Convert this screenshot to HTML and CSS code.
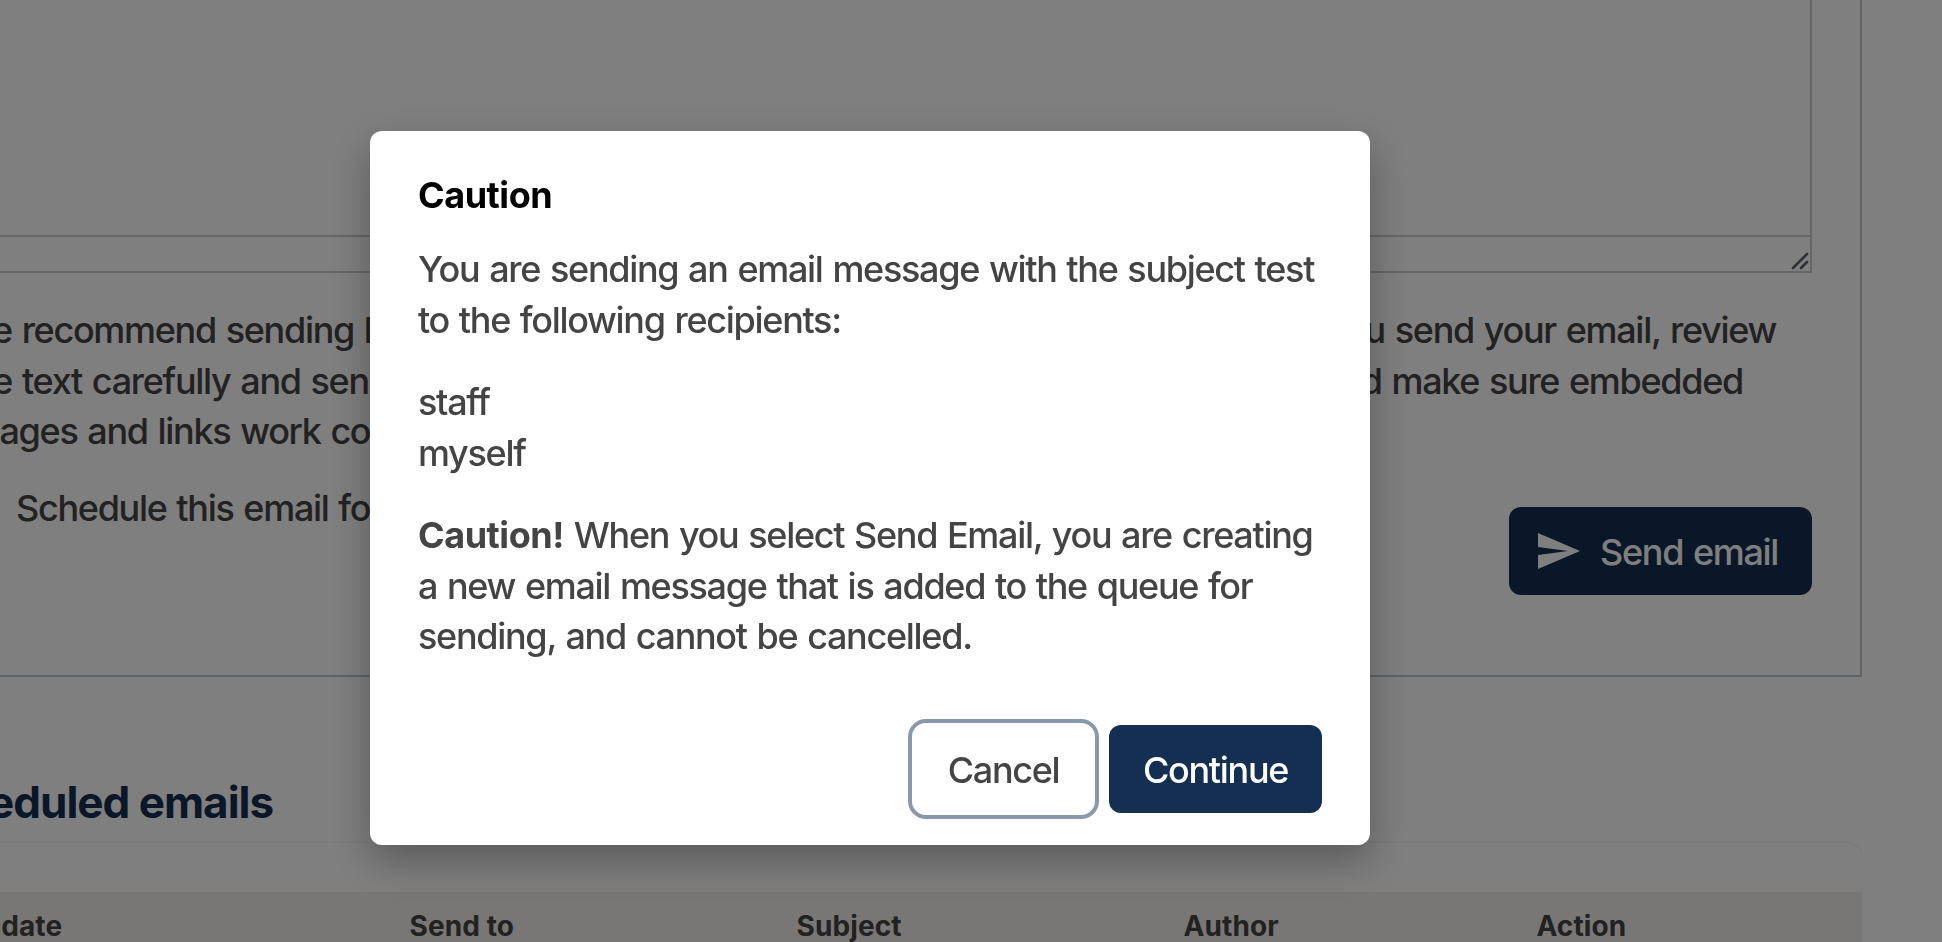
FILE: index.html
```html
<!DOCTYPE html>
<html lang="en">
<head>
<meta charset="utf-8">
<title>Send email</title>
<link rel="stylesheet" href="styles.css">
</head>
<body>
<main class="page">
  <section class="panel">
    <div class="editor">
      <div class="editor-area"></div>
      <div class="editor-status">
        <svg class="grip" width="18" height="18" viewBox="0 0 18 18"><path d="M2 16 16 2M10 16l6-6"/></svg>
      </div>
    </div>
    <div class="advice">
      <div class="advice-line"><span>We recommend sending large</span><span>you send your email, review</span></div>
      <div class="advice-line second"><span>the text carefully and send</span><span>and make sure embedded</span></div>
      <div class="advice-line third"><span>images and links work correctly.</span></div>
    </div>
    <div class="actions">
      <label class="schedule">Schedule this email for later</label>
      <button class="btn btn-primary btn-send">
        <svg width="48" height="48" viewBox="0 0 24 24"><path fill="currentColor" d="M2.01 21 23 12 2.01 3 2 10l15 2-15 2z"/></svg>
        <span>Send email</span>
      </button>
    </div>
  </section>
  <h2 class="heading">Scheduled emails</h2>
  <section class="card">
    <div class="thead">
      <span class="th-date">Send date</span><span>Send to</span><span>Subject</span><span>Author</span><span>Action</span>
    </div>
  </section>
</main>
<div class="overlay">
  <div class="dialog" role="dialog">
    <h3 class="title">Caution</h3>
    <div class="copy">
      <p>You are sending an email message with the subject test<br>to the following recipients:</p>
      <p>staff<br>myself</p>
      <p><strong>Caution!</strong> When you select Send Email, you are creating<br>a new email message that is added to the queue for<br>sending, and cannot be cancelled.</p>
    </div>
    <div class="buttons">
      <button class="btn btn-cancel"><span>Cancel</span></button>
      <button class="btn btn-primary btn-continue"><span>Continue</span></button>
    </div>
  </div>
</div>
</body>
</html>
```
FILE: styles.css
```css
* { box-sizing: border-box; }
html, body { margin: 0; height: 942px; overflow: hidden; }
body {
  background: #fff;
  color: #444;
  font: 450 36px/50.5px Inter, "Liberation Sans", sans-serif;
  letter-spacing: -1.3px;
  word-spacing: 1.5px;
}
h2, h3, p { margin: 0; }
button { font: inherit; letter-spacing: inherit; word-spacing: inherit; }
strong { font-weight: 700; letter-spacing: -0.45px; }

.page { margin-left: -92px; width: 1954px; height: 942px; overflow: hidden; }

.panel {
  height: 677px;
  padding: 0 48px;
  border: 2px solid #bcc6ce;
  border-top: 0;
}
.editor { height: 273px; border: 2px solid #ccc; border-top: 0; }
.editor-area { height: 235px; }
.editor-status {
  height: 36px;
  border-top: 2px solid #ccc;
  display: flex;
  justify-content: flex-end;
  align-items: flex-end;
}
.grip { margin: 0 1px 1px 0; fill: none; stroke: #5e6270; stroke-width: 2.6; stroke-linecap: round; }
.advice { padding: 32px 0 0 1px; }
.advice-line { display: flex; justify-content: space-between; padding-right: 36px; white-space: nowrap; }
.advice-line.second { padding: 0 69px 0 2px; }
.advice-line.third { padding-left: 2px; }
.actions { display: flex; justify-content: space-between; align-items: flex-start; padding-top: 26.5px; }
.schedule { padding: 0 0 0 58px; }

.btn {
  display: flex;
  align-items: center;
  justify-content: center;
  height: 88px;
  padding: 2px 0 0;
  border: 0;
  border-radius: 12px;
  white-space: nowrap;
}
.btn-primary { background: #152f53; color: #fff; }
.btn-send { width: 303px; margin-top: 24px; gap: 18px; justify-content: flex-start; padding: 0 0 0 25px; }
.btn-send span { padding-top: 2px; }

.heading { margin: 95px 0 0 1px; font-size: 44px; line-height: 60px; font-weight: 700; letter-spacing: -1px; word-spacing: 0; color: #152f53; }
.card {
  margin-top: 11px;
  height: 140px;
  padding-top: 49px;
  border-radius: 16px 16px 0 0;
  box-shadow: 0 1px 4px rgba(0, 0, 0, 0.15);
}
.thead {
  display: grid;
  grid-template-columns: 501.5px 387px 387px 353px 1fr;
  height: 91px;
  padding-top: 9px;
  background: #f1efeb;
  font-size: 28px;
  font-weight: 700;
  letter-spacing: 0.1px;
  word-spacing: 0;
}
.th-date { padding-left: 16px; }

.overlay {
  position: fixed;
  inset: 0;
  padding: 131px 0 0 370px;
  background: rgba(0, 0, 0, 0.5);
}
.dialog {
  width: 1000px;
  height: 714px;
  padding: 39px 48px 32px;
  display: flex;
  flex-direction: column;
  border-radius: 12px;
  background: #fff;
  box-shadow: 0 16px 40px rgba(0, 0, 0, 0.3);
}
.title { font-size: 36px; line-height: 50px; font-weight: 700; letter-spacing: -0.45px; color: #000; }
.copy { display: flex; flex-direction: column; gap: 32px; margin-top: 24px; white-space: nowrap; }
.buttons { display: flex; justify-content: flex-end; gap: 16px; margin-top: auto; }
.btn-cancel { width: 179px; background: #fff; color: #444; outline: 4px solid #8a98ab; outline-offset: 2px; }
.btn-continue { width: 213px; }
```
